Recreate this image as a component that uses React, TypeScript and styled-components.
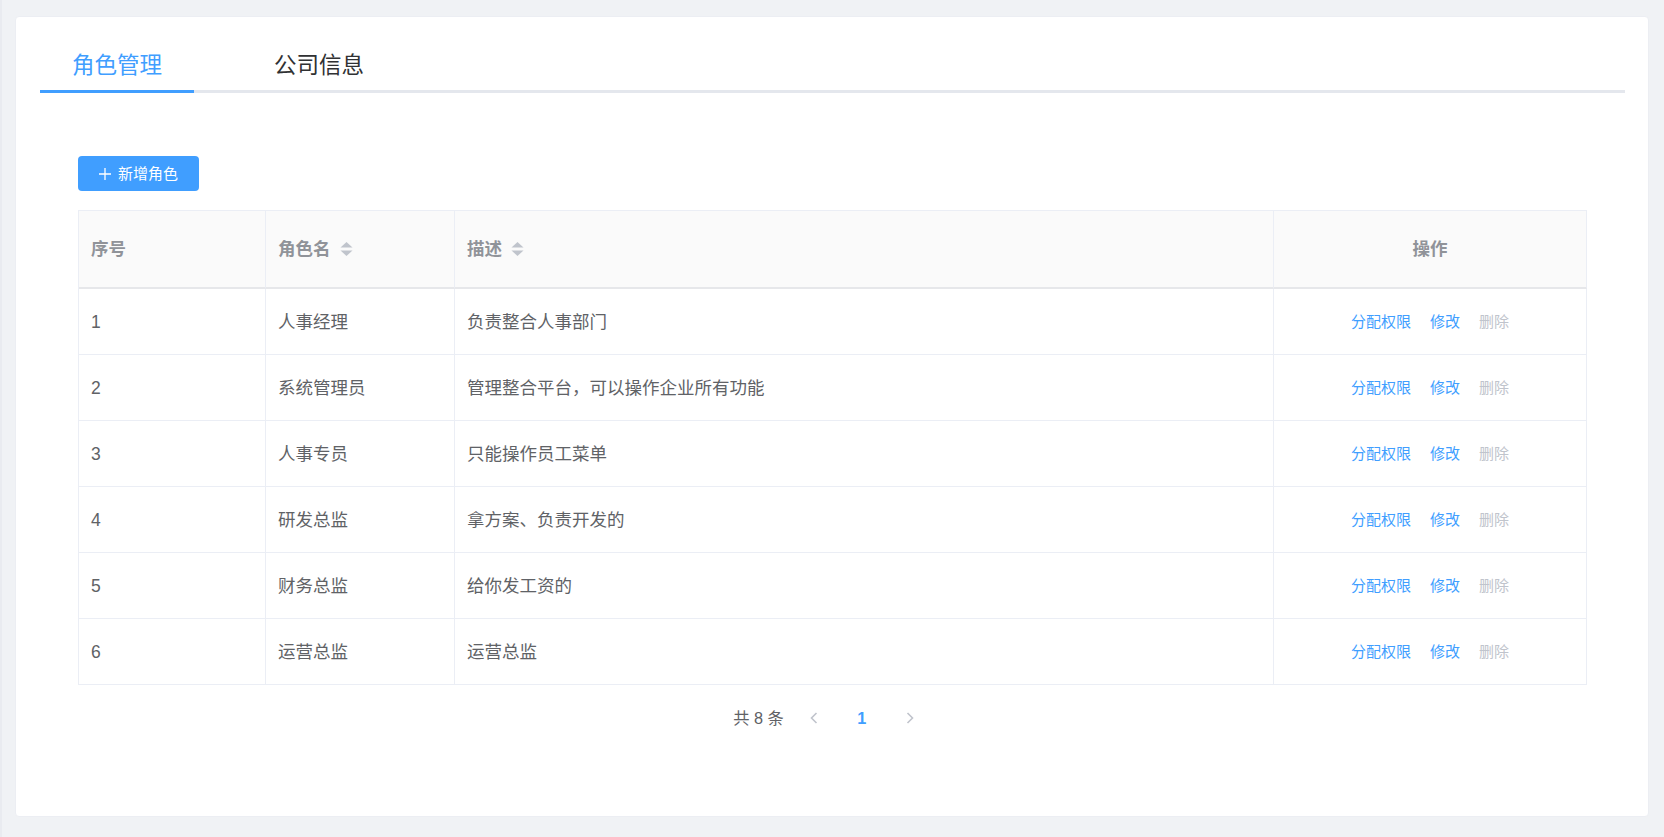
import React from "react";
import styled, { createGlobalStyle } from "styled-components";

const Global = createGlobalStyle`
  html, body { margin: 0; padding: 0; background: #f0f2f5; }
  body { font-family: "Liberation Sans", "Noto Sans CJK SC", sans-serif; line-height: 20px; }
  * { box-sizing: border-box; }
`;

const Page = styled.div`
  width: 1664px;
  height: 837px;
  padding: 16px 15px 20px 13px;
  border-left: 2px solid #e9ebf0;
`;

const Card = styled.div`
  height: 801px;
  background: #fff;
  border-radius: 4px;
  border: 1px solid #eceef3;
  padding: 23px 23px 0 24px;
`;

const TabBar = styled.div`
  display: flex;
  border-bottom: 3px solid #e4e7ed;
`;

const Tab = styled.div<{ $active?: boolean }>`
  height: 53px;
  line-height: 52px;
  padding: 0 32px;
  margin-bottom: -3px;
  font-size: 22.5px;
  color: ${(p) => (p.$active ? "#409eff" : "#303133")};
  border-bottom: 3px solid ${(p) => (p.$active ? "#409eff" : "transparent")};
  & + & { margin-left: 48px; }
`;

const Content = styled.div`
  padding: 63px 38px 0 38px;
`;

const AddButton = styled.button`
  display: inline-flex;
  align-items: center;
  gap: 7px;
  height: 35px;
  width: 121px;
  padding: 0 0 0 21px;
  border: none;
  border-radius: 4px;
  background: #409eff;
  color: #fff;
  font-family: inherit;
  font-size: 15px;
  line-height: 20px;
`;

const Table = styled.div`
  margin-top: 19px;
  width: 1509px;
  border-top: 1px solid #ebeef5;
  border-left: 1px solid #ebeef5;
`;

const Row = styled.div<{ $head?: boolean }>`
  display: grid;
  grid-template-columns: 187px 189px 819px 313px;
  height: ${(p) => (p.$head ? 78 : 66)}px;
  background: ${(p) => (p.$head ? "#fafafa" : "#fff")};
`;

const Cell = styled.div<{ $head?: boolean; $center?: boolean }>`
  display: flex;
  align-items: center;
  justify-content: ${(p) => (p.$center ? "center" : "flex-start")};
  padding-left: ${(p) => (p.$center ? 0 : 12)}px;
  border-right: 1px solid #ebeef5;
  border-bottom: ${(p) => (p.$head ? "2px solid #e6e7ea" : "1px solid #ebeef5")};
  font-size: 17.5px;
  line-height: 20px;
  font-weight: ${(p) => (p.$head ? 700 : 400)};
  color: ${(p) => (p.$head ? "#909399" : "#606266")};
  white-space: nowrap;
`;

const SortIcon = styled.svg`
  margin-left: 9px;
  flex: none;
`;

const Actions = styled.div`
  display: flex;
  gap: 19px;
  font-size: 15px;
`;

const ActionLink = styled.span<{ $disabled?: boolean }>`
  color: ${(p) => (p.$disabled ? "#c0c4cc" : "#409eff")};
`;

const Pagination = styled.div`
  margin-top: 13px;
  height: 40px;
  display: flex;
  justify-content: center;
  align-items: center;
  font-size: 16.25px;
  color: #606266;
`;

const Total = styled.span`
  margin-right: 6px;
  margin-left: 2px;
`;

const PageBtn = styled.span<{ $active?: boolean }>`
  width: 48px;
  display: flex;
  justify-content: center;
  align-items: center;
  color: ${(p) => (p.$active ? "#409eff" : "#c0c4cc")};
  font-weight: ${(p) => (p.$active ? 700 : 400)};
`;

const Sort = () => (
  <SortIcon width="13" height="14" viewBox="0 0 13 14">
    <path d="M6.5 0 L12.5 5.5 H0.5 Z" fill="#c0c4cc" />
    <path d="M6.5 14 L12.5 8.5 H0.5 Z" fill="#c0c4cc" />
  </SortIcon>
);

const rows = [
  ["1", "人事经理", "负责整合人事部门"],
  ["2", "系统管理员", "管理整合平台，可以操作企业所有功能"],
  ["3", "人事专员", "只能操作员工菜单"],
  ["4", "研发总监", "拿方案、负责开发的"],
  ["5", "财务总监", "给你发工资的"],
  ["6", "运营总监", "运营总监"],
];

export default function App() {
  return (
    <>
      <Global />
      <Page>
        <Card>
          <TabBar>
            <Tab $active>角色管理</Tab>
            <Tab>公司信息</Tab>
          </TabBar>
          <Content>
            <AddButton>
              <svg width="12" height="12" viewBox="0 0 12 12">
                <path d="M6 0 V12 M0 6 H12" stroke="#fff" strokeWidth="1.3" />
              </svg>
              新增角色
            </AddButton>
            <Table>
              <Row $head>
                <Cell $head>序号</Cell>
                <Cell $head>
                  角色名
                  <Sort />
                </Cell>
                <Cell $head>
                  描述
                  <Sort />
                </Cell>
                <Cell $head $center>
                  操作
                </Cell>
              </Row>
              {rows.map((r) => (
                <Row key={r[0]}>
                  <Cell>{r[0]}</Cell>
                  <Cell>{r[1]}</Cell>
                  <Cell>{r[2]}</Cell>
                  <Cell $center>
                    <Actions>
                      <ActionLink>分配权限</ActionLink>
                      <ActionLink>修改</ActionLink>
                      <ActionLink $disabled>删除</ActionLink>
                    </Actions>
                  </Cell>
                </Row>
              ))}
            </Table>
            <Pagination>
              <Total>共 8 条</Total>
              <PageBtn>
                <svg width="8" height="12" viewBox="0 0 8 12">
                  <path d="M6.5 1 L1.5 6 L6.5 11" fill="none" stroke="#c0c4cc" strokeWidth="1.6" />
                </svg>
              </PageBtn>
              <PageBtn $active>1</PageBtn>
              <PageBtn>
                <svg width="8" height="12" viewBox="0 0 8 12">
                  <path d="M1.5 1 L6.5 6 L1.5 11" fill="none" stroke="#c0c4cc" strokeWidth="1.6" />
                </svg>
              </PageBtn>
            </Pagination>
          </Content>
        </Card>
      </Page>
    </>
  );
}
